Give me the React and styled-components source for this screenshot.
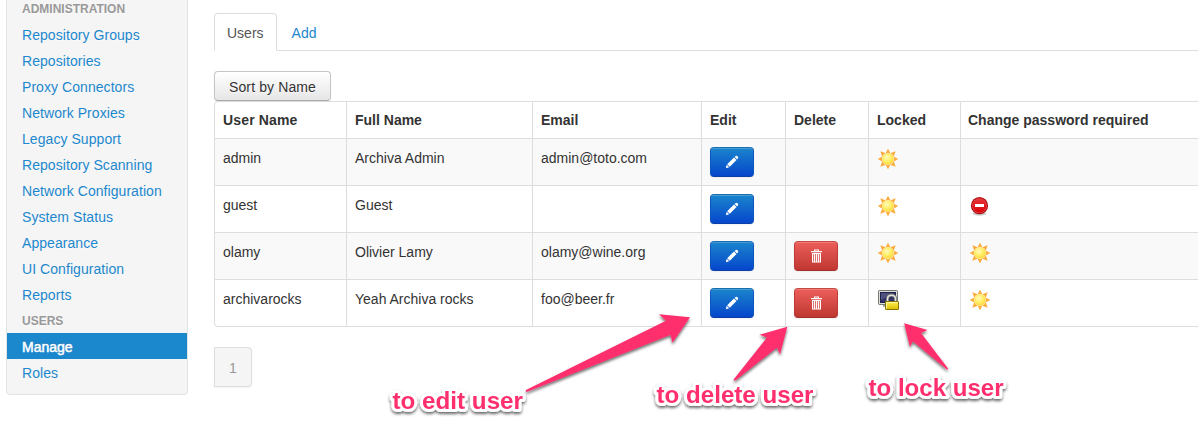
import React from "react";
import styled, { createGlobalStyle } from "styled-components";

const Global = createGlobalStyle`
  * { box-sizing: border-box; }
  body {
    margin: 0;
    background: #fff;
    color: #333;
    font: 14px/20px "Liberation Sans", Arial, sans-serif;
    overflow: hidden;
  }
`;

const Page = styled.div`
  position: relative;
  display: flex;
  align-items: flex-start;
  gap: 26px;
  width: 1198px;
  height: 434px;
  padding-left: 6px;
  overflow: hidden;
`;

const Sidebar = styled.nav`
  flex: none;
  width: 182px;
  margin-top: -15px;
  padding: 9px 0;
  background: #f5f5f5;
  border: 1px solid #e3e3e3;
  border-radius: 4px;
`;

const NavHeader = styled.div`
  height: 26px;
  padding: 4px 15px 2px;
  color: #999;
  font-size: 12px;
  font-weight: bold;
  text-shadow: 0 1px 0 rgba(255, 255, 255, 0.5);
`;

const NavLink = styled.a`
  display: block;
  height: 26px;
  padding: 4px 15px 2px;
  white-space: nowrap;
  letter-spacing: ${(p) => (p.$active ? 0 : "0.06px")};
  color: ${(p) => (p.$active ? "#fff" : "#1c87cc")};
  background: ${(p) => (p.$active ? "#1b87cc" : "transparent")};
  text-shadow: ${(p) =>
    p.$active ? "0 -1px 0 rgba(0,0,0,.2)" : "0 1px 0 rgba(255,255,255,.5)"};
  -webkit-text-stroke: ${(p) => (p.$active ? "0.5px #fff" : "0")};
`;

const Main = styled.main`
  flex: none;
  width: 1040px;
  padding-top: 13px;
`;

const Tabs = styled.div`
  display: flex;
  gap: 2px;
  height: 38px;
  margin-bottom: 20px;
  border-bottom: 1px solid #ddd;
`;

const Tab = styled.a`
  height: 38px;
  padding: 9px 12px;
  border: 1px solid ${(p) => (p.$active ? "#ddd" : "transparent")};
  border-bottom-color: ${(p) => (p.$active ? "#fff" : "transparent")};
  border-radius: 4px 4px 0 0;
  color: ${(p) => (p.$active ? "#555" : "#1c87cc")};
`;

const SortButton = styled.button`
  display: block;
  width: 117px;
  height: 30px;
  padding: 2px 0 0;
  border: 1px solid #c5c5c5;
  border-bottom-color: #a9a9a9;
  border-radius: 4px;
  background: linear-gradient(#fff, #e6e6e6);
  box-shadow: inset 0 1px 0 rgba(255, 255, 255, 0.2), 0 1px 2px rgba(0, 0, 0, 0.05);
  color: #333;
  font: inherit;
  letter-spacing: 0.12px;
  text-shadow: 0 1px 1px rgba(255, 255, 255, 0.75);
`;

const Table = styled.table`
  width: 1040px;
  table-layout: fixed;
  border: 1px solid #ddd;
  border-left: 0;
  border-radius: 4px;
  border-spacing: 0;
`;

const Col = styled.col`
  width: ${(p) => p.$w};
`;

const HeadCell = styled.th`
  height: 36px;
  padding: 8px;
  border-left: 1px solid #ddd;
  text-align: left;
  white-space: nowrap;
  &:first-child { border-top-left-radius: 4px; letter-spacing: 0.15px; }
  &:last-child { padding-left: 7px; }
`;

const Cell = styled.td`
  height: 47px;
  padding: 9px 8px 7px;
  border-top: 1px solid #ddd;
  border-left: 1px solid #ddd;
  vertical-align: top;
  white-space: nowrap;
`;

const Row = styled.tr`
  &:nth-child(odd) ${Cell} { background: #f9f9f9; }
  &:last-child ${Cell}:first-child { border-bottom-left-radius: 4px; }
`;

const ActionButton = styled.button`
  display: flex;
  align-items: center;
  justify-content: center;
  width: 44px;
  height: 30px;
  margin-top: -1px;
  padding: 0;
  border: 1px solid;
  border-radius: 4px;
  border-color: ${(p) => (p.$danger ? "#c74741 #bd3a35 #a4302b" : "#176fb0 #0c56bd #0b3fa8")};
  background: ${(p) =>
    p.$danger ? "linear-gradient(#ee5f5b, #bd362f)" : "linear-gradient(#1b87cc, #0544cc)"};
  background-origin: border-box;
  box-shadow: inset 0 1px 0 rgba(255, 255, 255, 0.2), 0 1px 2px rgba(0, 0, 0, 0.05);
`;

const StatusSvg = styled.svg`
  display: block;
  width: 22px;
  height: 22px;
  margin-top: -1px;
`;

const Pager = styled.div`
  display: flex;
  align-items: center;
  justify-content: center;
  width: 38px;
  height: 40px;
  margin-top: 20px;
  padding-top: 2px;
  border: 1px solid #ddd;
  border-radius: 0 4px 4px 0;
  background: #f5f5f5;
  color: #999;
  box-shadow: 0 1px 2px rgba(0, 0, 0, 0.05);
`;

const Annotations = styled.svg`
  position: absolute;
  inset: 0;
  width: 1198px;
  height: 434px;
  pointer-events: none;
`;

const Callout = styled.text`
  font: bold 24px "Liberation Sans", Arial, sans-serif;
  fill: #ff2d6c;
  stroke: #fff;
  stroke-width: 6px;
  stroke-linejoin: round;
  paint-order: stroke;
`;

const Pencil = () => (
  <svg width="14" height="14" viewBox="0 0 14 14" fill="#fff">
    <path d="M.8 13.2 1.7 9.8 4.2 12.3Z" />
    <path d="M2.2 9.2 9 2.5 11.5 5 4.8 11.8Z" />
    <path d="M9.6 1.9 10.7.9Q11.4.4 12.2 1.1L12.9 1.8Q13.6 2.6 13 3.3L12.1 4.4Z" />
  </svg>
);

const Trash = () => (
  <svg width="14" height="14" viewBox="0 0 14 14" fill="#fff">
    <path d="M2 2h3V.5h5V2h3v1.2H2ZM6 1.4V2h3v-.6Z" fillRule="evenodd" />
    <path
      d="M3 4h9v9.5H3ZM4 5v7.5h1V5ZM6 5v7.5h1V5ZM8 5v7.5h1V5ZM10 5v7.5h1V5Z"
      fillRule="evenodd"
    />
    <path d="M4 5h7v7.5H4Z" opacity=".25" />
  </svg>
);

const rays = Array.from({ length: 16 }, (_, i) => {
  const a = (i * Math.PI) / 8;
  const r = i % 2 ? 6.3 : i % 4 ? 10.8 : 10.2;
  return `${(11 + r * Math.sin(a)).toFixed(2)},${(12 - r * Math.cos(a)).toFixed(2)}`;
}).join(" ");

const Sun = () => (
  <StatusSvg viewBox="0 0 22 22" overflow="visible">
    <polygon points={rays} fill="#fbaa3c" />
    <circle cx="11" cy="12" r="6.2" fill="#ffe9a0" />
    <circle cx="11" cy="12" r="5.5" fill="url(#sunFace)" />
  </StatusSvg>
);

const Denied = () => (
  <StatusSvg viewBox="0 0 22 22" overflow="visible">
    <ellipse cx="10.5" cy="19.7" rx="7" ry="2" fill="#000" opacity=".2" />
    <circle cx="10.5" cy="11.7" r="8.6" fill="#a90d10" />
    <circle cx="10.5" cy="11.7" r="7.4" fill="#ed4a4b" />
    <circle cx="10.5" cy="11.7" r="6.8" fill="url(#deniedFace)" />
    <rect x="6" y="10" width="9" height="3" fill="#fff" />
  </StatusSvg>
);

const LockedScreen = () => (
  <StatusSvg viewBox="0 0 22 22" overflow="visible">
    <path d="M6 17h7v1.7H6Z" fill="#999b93" />
    <rect x="1.5" y="2.5" width="19" height="14" rx=".8" fill="#dddeda" stroke="#777a73" />
    <rect x="3.5" y="4.5" width="15" height="10" fill="#303266" stroke="#20214a" />
    <path d="M4 5h13L4 12Z" fill="#62648a" opacity=".65" />
    <path d="M10.5 14V11q0-3.8 4-3.8t4 3.8v3" fill="none" stroke="#6c6e6a" strokeWidth="3" />
    <path d="M10.5 14V11q0-3.8 4-3.8t4 3.8v3" fill="none" stroke="#e4e5e1" strokeWidth="1.5" />
    <rect x="8.5" y="13.5" width="13" height="8" rx=".5" fill="url(#lockFace)" stroke="#8a7200" />
    <path d="M9.5 20.5v-6h11" fill="none" stroke="#fff79c" />
  </StatusSvg>
);

const statusIcons = { sun: Sun, denied: Denied, locked: LockedScreen };
const Status = ({ kind }) => {
  const Icon = statusIcons[kind];
  return Icon ? <Icon /> : null;
};

const adminLinks = [
  "Repository Groups",
  "Repositories",
  "Proxy Connectors",
  "Network Proxies",
  "Legacy Support",
  "Repository Scanning",
  "Network Configuration",
  "System Status",
  "Appearance",
  "UI Configuration",
  "Reports",
];

const columns = [
  ["User Name", "132px"],
  ["Full Name", "186px"],
  ["Email", "169px"],
  ["Edit", "84px"],
  ["Delete", "83px"],
  ["Locked", "92px"],
  ["Change password required", "auto"],
];

const users = [
  { name: "admin", full: "Archiva Admin", email: "admin@toto.com", lock: "sun" },
  { name: "guest", full: "Guest", email: "", lock: "sun", change: "denied" },
  { name: "olamy", full: "Olivier Lamy", email: "olamy@wine.org", del: true, lock: "sun", change: "sun" },
  { name: "archivarocks", full: "Yeah Archiva rocks", email: "foo@beer.fr", del: true, lock: "locked", change: "sun" },
];

const arrows = [
  "M525.5 390.2 666 320.7 659 314.3 690 317.3 672.5 342.8 670.5 334.7 526.5 392Z",
  "M733.5 379.8 767 337.5 759.5 334.7 787.3 326.8 780 354.5 777 347.5 735 380.8Z",
  "M948.2 368.8 921 333 927.5 330 904.2 323.2 910 347 912.8 341.2 947 369.6Z",
];

const callouts = [
  { text: "to edit user", x: 392.5, y: 409, w: 130.5 },
  { text: "to delete user", x: 656.5, y: 402.7, w: 157 },
  { text: "to lock user", x: 868.5, y: 395.7, w: 135 },
];

export default function App() {
  return (
    <Page>
      <Global />
      <Sidebar>
        <NavHeader>ADMINISTRATION</NavHeader>
        {adminLinks.map((label) => (
          <NavLink key={label}>{label}</NavLink>
        ))}
        <NavHeader>USERS</NavHeader>
        <NavLink $active>Manage</NavLink>
        <NavLink>Roles</NavLink>
      </Sidebar>
      <Main>
        <Tabs>
          <Tab $active>Users</Tab>
          <Tab>Add</Tab>
        </Tabs>
        <SortButton>Sort by Name</SortButton>
        <Table>
          <colgroup>
            {columns.map(([label, w]) => (
              <Col key={label} $w={w} />
            ))}
          </colgroup>
          <thead>
            <tr>
              {columns.map(([label]) => (
                <HeadCell key={label}>{label}</HeadCell>
              ))}
            </tr>
          </thead>
          <tbody>
            {users.map((u) => (
              <Row key={u.name}>
                <Cell>{u.name}</Cell>
                <Cell>{u.full}</Cell>
                <Cell>{u.email}</Cell>
                <Cell>
                  <ActionButton aria-label="Edit"><Pencil /></ActionButton>
                </Cell>
                <Cell>
                  {u.del && <ActionButton $danger aria-label="Delete"><Trash /></ActionButton>}
                </Cell>
                <Cell><Status kind={u.lock} /></Cell>
                <Cell><Status kind={u.change} /></Cell>
              </Row>
            ))}
          </tbody>
        </Table>
        <Pager>1</Pager>
      </Main>
      <Annotations viewBox="0 0 1198 434">
        <defs>
          <radialGradient id="sunFace" cx=".4" cy=".35" r=".7">
            <stop offset="0" stopColor="#fffbc0" />
            <stop offset=".6" stopColor="#ffec5c" />
            <stop offset="1" stopColor="#fbd343" />
          </radialGradient>
          <linearGradient id="deniedFace" x2="0" y2="1">
            <stop offset="0" stopColor="#e93033" />
            <stop offset="1" stopColor="#d80409" />
          </linearGradient>
          <linearGradient id="lockFace" x2="0" y2="1">
            <stop offset="0" stopColor="#fff15a" />
            <stop offset="1" stopColor="#d9bd00" />
          </linearGradient>
          <filter id="drop" x="-10%" y="-20%" width="120%" height="150%">
            <feDropShadow dx="0" dy="2" stdDeviation="1.5" floodOpacity=".6" />
          </filter>
        </defs>
        {arrows.map((d) => (
          <path key={d} d={d} fill="#ff2d6c" filter="url(#drop)" />
        ))}
        {callouts.map((c) => (
          <Callout
            key={c.text}
            x={c.x}
            y={c.y}
            textLength={c.w}
            lengthAdjust="spacingAndGlyphs"
            filter="url(#drop)"
          >
            {c.text}
          </Callout>
        ))}
      </Annotations>
    </Page>
  );
}
